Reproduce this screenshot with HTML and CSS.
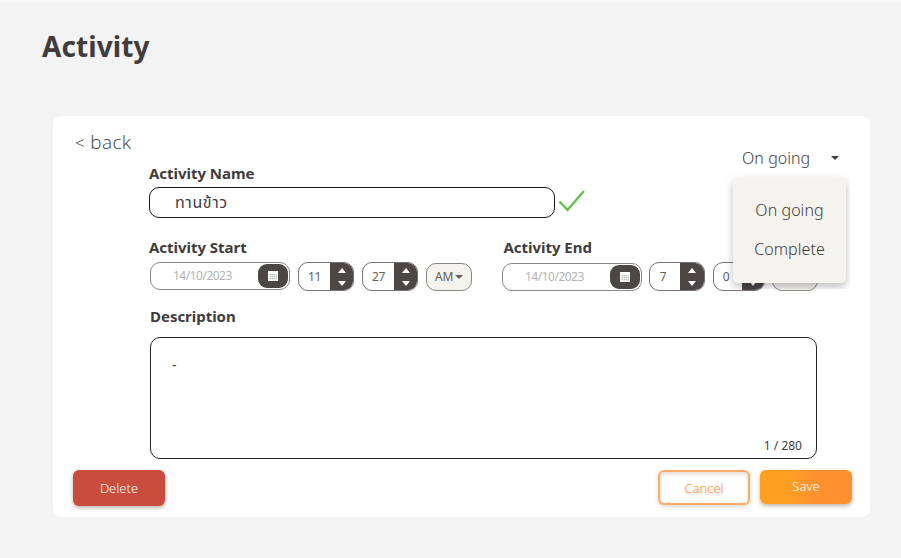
FILE: index.html
```html
<!DOCTYPE html>
<html lang="en">
<head>
<meta charset="utf-8">
<title>Activity</title>
<link rel="stylesheet" href="styles.css">
</head>
<body>
<svg width="0" height="0" class="defs">
  <symbol id="calendar" viewBox="0 0 10 10">
    <path d="M0 0h10v10H0z" fill="#fff"/>
    <path d="M1 3.5h8M1 5.5h8M1 7.5h8M2.5 3v6M4.5 3v6M6.5 3v6M8.5 3v6" stroke="#a9a5a3" stroke-width=".4"/>
  </symbol>
  <symbol id="arrows" viewBox="0 0 8 20">
    <path d="M4 1l4 5H0zM0 14h8l-4 5z" fill="#fff"/>
  </symbol>
</svg>
<main class="page">
  <h1 class="title"><span>Activity</span></h1>
  <section class="card">
    <header class="card-head">
      <a class="back"><span class="lt">&lt;</span> back</a>
      <div class="status">
        <span class="status-value">On going</span><i class="caret"></i>
        <div class="menu-clip"><div class="menu"><span>On going</span><span class="complete">Complete</span></div></div>
      </div>
    </header>
    <div class="form">
      <label class="label name-label">Activity Name</label>
      <div class="name-row">
        <div class="name-input">ทานข้าว</div>
        <svg class="check" width="28" height="24" viewBox="0 0 28 24"><path d="M1.5 12.5L9.5 21L26 2" fill="none" stroke="#6abf4b" stroke-width="2.4"/></svg>
      </div>
      <div class="times">
        <div class="time-group start">
          <label class="label">Activity Start</label>
          <div class="controls">
            <div class="date"><span>14/10/2023</span><b><svg width="10" height="10"><use href="#calendar"/></svg></b></div>
            <div class="spin"><span>11</span><b><svg width="8" height="20"><use href="#arrows"/></svg></b></div>
            <div class="spin"><span>27</span><b><svg width="8" height="20"><use href="#arrows"/></svg></b></div>
            <div class="ampm">AM<i class="caret"></i></div>
          </div>
        </div>
        <div class="time-group end">
          <label class="label">Activity End</label>
          <div class="controls">
            <div class="date"><span>14/10/2023</span><b><svg width="10" height="10"><use href="#calendar"/></svg></b></div>
            <div class="spin"><span>7</span><b><svg width="8" height="20"><use href="#arrows"/></svg></b></div>
            <div class="spin narrow"><span>0</span><b><svg width="8" height="20"><use href="#arrows"/></svg></b></div>
            <div class="ampm">AM<i class="caret"></i></div>
          </div>
        </div>
      </div>
      <label class="label desc-label">Description</label>
      <div class="desc"><span>-</span><span class="count">1 / 280</span></div>
    </div>
    <footer class="actions">
      <button class="btn delete">Delete</button>
      <button class="btn cancel">Cancel</button>
      <button class="btn save">Save</button>
    </footer>
  </section>
</main>
</body>
</html>
```
FILE: styles.css
```css
* { box-sizing: border-box; }
body {
  margin: 0;
  background: #f3f3f3;
  color: #403c3b;
  font-family: "Noto Sans", "Open Sans", "Noto Sans Thai", sans-serif;
}
.defs { display: block; }
.page { height: 558px; padding: 26px 31px 41px 42px; border-top: 2px solid #f7f7f7; overflow: hidden; }
.title { margin: 0; height: 88px; font-size: 28px; line-height: 36px; letter-spacing: .1px; }
.card { width: 817px; height: 401px; margin-left: 11px; background: #fff; border-radius: 8px; }
.card-head { height: 47px; display: flex; justify-content: space-between; padding: 13px 25px 0 22px; }
.back { font-family: "Open Sans", sans-serif; font-size: 19px; font-weight: 350; line-height: 26px; letter-spacing: .35px; white-space: pre; }
.lt { font-size: 17px; }
.status { position: relative; z-index: 1; display: flex; align-items: center; justify-content: space-between; width: 103px; height: 26px; margin-top: 16px; padding-right: 6px; font-size: 16px; font-weight: 350; letter-spacing: .05px; }
.caret { border: 4px solid transparent; border-top-color: currentColor; border-bottom: 0; }
.menu-clip { position: absolute; left: -25px; top: 25px; width: 133px; height: 119px; overflow: hidden; padding: 7px 4px 0 16px; }
.menu { height: 106px; padding: 14px 0; display: flex; flex-direction: column; align-items: center; background: #f4f3ee; border-radius: 5px; box-shadow: 0 4px 8px rgba(0,0,0,.25); line-height: 39px; }
.form { width: 668px; margin-left: 96px; }
.label { display: block; font-size: 15px; font-weight: 700; line-height: 20px; letter-spacing: -.03px; }
.name-row { display: flex; gap: 3px; margin-top: 4px; }
.name-input { width: 406px; height: 31px; padding-left: 25px; border: 1px solid #161616; border-radius: 10px; font-size: 16px; line-height: 29px; letter-spacing: .6px; }
.check { margin-top: 2px; }
.times { display: flex; gap: 31px; margin-top: 19px; }
.start { width: 321px; }
.end { width: 319px; }
.end .label { padding-left: 2.5px; }
.controls { display: flex; gap: 8px; margin: 5px 0 0 1px; align-items: center; }
.date { flex: none; width: 140px; height: 28px; padding: 1px 1px 1px 22px; display: flex; justify-content: space-between; align-items: center; border: 1px solid #898584; border-radius: 10px; color: #b5b3b2; font-size: 12px; letter-spacing: -.5px; }
.start .date { margin-top: -2px; }
.date b { width: 30px; height: 24px; display: grid; place-items: center; background: #4c4644; border-radius: 9px; }
.spin { flex: none; width: 56px; height: 29px; display: flex; align-items: center; overflow: hidden; border: 1px solid #787372; border-radius: 10px; font-size: 12px; color: #625d5b; }
.spin span { width: 31px; text-align: center; letter-spacing: -.3px; }
.spin b { flex: 1; height: 29px; display: grid; place-items: center; background: #4c4644; }
.ampm { flex: none; width: 46px; height: 28px; display: flex; align-items: center; justify-content: center; gap: 2px; background: #f4f3ee; border: 1px solid #898584; border-radius: 10px; font-size: 12px; color: #625d5b; letter-spacing: -.3px; }
.end .controls { gap: 7px; margin-left: 1px; }
.end .spin span { width: 30px; padding-right: 4px; }
.end .spin.narrow span { width: 28px; }
.narrow { width: 52px; margin-left: 1px; }
.desc-label { margin: 15px 0 0 1px; }
.desc { width: 667px; height: 122px; margin: 11px 0 0 1px; padding: 17px 14px 2px 21px; display: flex; flex-direction: column; justify-content: space-between; border: 1px solid #262626; border-radius: 10px; font-size: 14px; line-height: 20px; }
.count { align-self: flex-end; font-size: 12px; }
.actions { display: flex; padding: 11px 18px 0 20px; }
.btn { width: 92px; height: 35px; padding: 0; border: 0; border-radius: 6px; color: #fff; font: 350 13px "Noto Sans", sans-serif; box-shadow: 0 2px 4px rgba(100,70,30,.4); }
.delete { height: 36px; background: #c94d3c; margin-right: auto; }
.cancel { margin-right: 10px; background: #fff; border: 2px solid #ffab65; color: #ff983f; text-shadow: 0 2px 3px rgba(100,70,30,.3); box-shadow: 0 2px 4px rgba(100,70,30,.2), inset 0 2px 4px rgba(100,70,30,.2); }
.save { height: 34px; padding-bottom: 2px; background: linear-gradient(90deg, #ff9f22 30%, #ff902f 60%); }
```
